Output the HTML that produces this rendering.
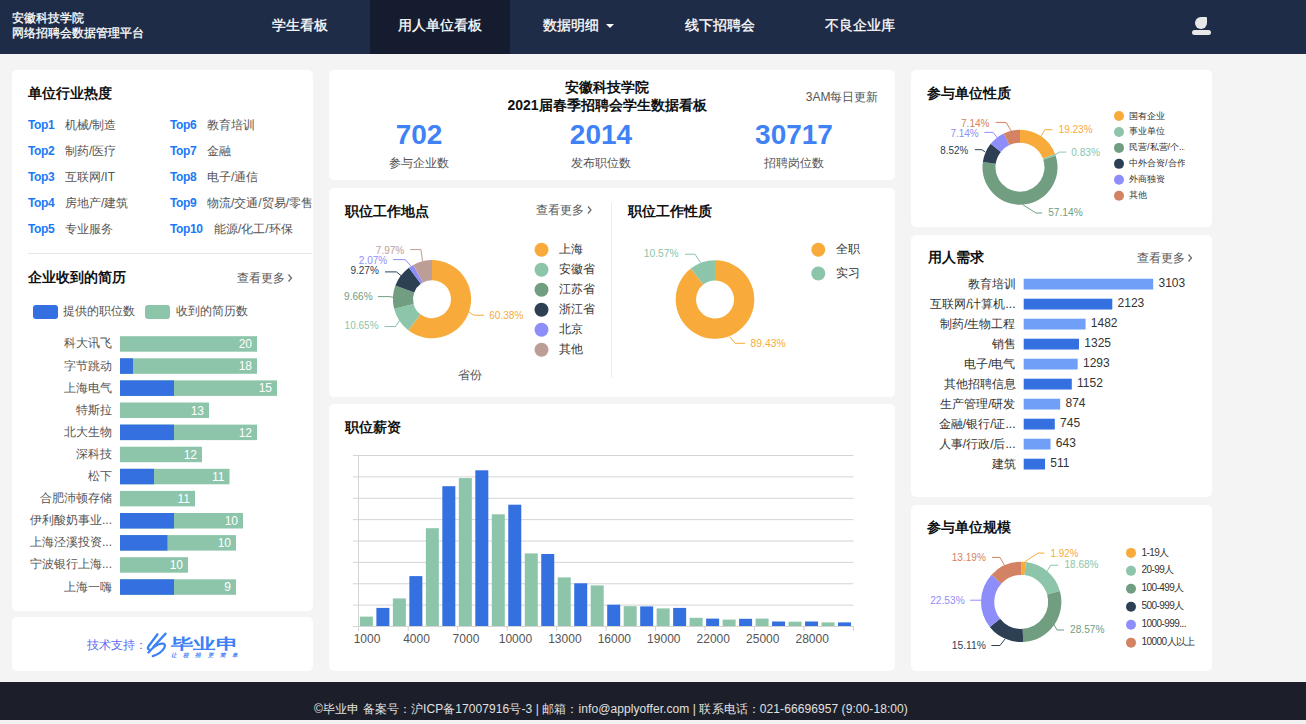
<!DOCTYPE html>
<html><head><meta charset="utf-8"><style>
*{margin:0;padding:0;box-sizing:border-box}
html,body{width:1306px;height:724px;overflow:hidden;background:#f1f1f1;font-family:"Liberation Sans",sans-serif}
.t{position:absolute;white-space:nowrap}
.p{position:absolute;background:#fff;border-radius:5px}
#hdr{position:absolute;left:0;top:0;width:1306px;height:54px;background:#1f2c47}
#act{position:absolute;left:370px;top:0;width:140px;height:54px;background:#151c2f}
#body{position:absolute;left:0;top:54px;width:1306px;height:628px;background:#f4f4f4}
#ftr{position:absolute;left:0;top:682px;width:1306px;height:38px;background:#1c1f29}
svg{position:absolute;left:0;top:0}
svg text{font-family:"Liberation Sans",sans-serif}
</style></head><body>
<div id="hdr"></div><div id="act"></div><div id="body"></div><div id="ftr"></div>
<div class="p" style="left:12px;top:70px;width:301px;height:541px"></div>
<div class="p" style="left:12px;top:617px;width:301px;height:54px"></div>
<div class="p" style="left:329px;top:70px;width:566px;height:110px"></div>
<div class="p" style="left:329px;top:188px;width:566px;height:209px"></div>
<div class="p" style="left:329px;top:404px;width:566px;height:267px"></div>
<div class="p" style="left:911px;top:70px;width:301px;height:157px"></div>
<div class="p" style="left:911px;top:235px;width:301px;height:262px"></div>
<div class="p" style="left:911px;top:505px;width:301px;height:166px"></div>
<div class="t" style="left:12px;top:9.5px;line-height:16px;font-size:12px;color:#fff;-webkit-text-stroke:0.3px #fff;">安徽科技学院</div>
<div class="t" style="left:12px;top:25.0px;line-height:16px;font-size:12px;color:#fff;-webkit-text-stroke:0.3px #fff;">网络招聘会数据管理平台</div>
<div class="t" style="left:0.0px;width:600px;text-align:center;top:14.5px;line-height:20px;font-size:14px;color:#fff;-webkit-text-stroke:0.3px #fff;">学生看板</div>
<div class="t" style="left:140.0px;width:600px;text-align:center;top:14.5px;line-height:20px;font-size:14px;color:#fff;-webkit-text-stroke:0.3px #fff;">用人单位看板</div>
<div class="t" style="left:271.0px;width:600px;text-align:center;top:14.5px;line-height:20px;font-size:14px;color:#fff;-webkit-text-stroke:0.3px #fff;">数据明细</div>
<div class="t" style="left:420.0px;width:600px;text-align:center;top:14.5px;line-height:20px;font-size:14px;color:#fff;-webkit-text-stroke:0.3px #fff;">线下招聘会</div>
<div class="t" style="left:560.0px;width:600px;text-align:center;top:14.5px;line-height:20px;font-size:14px;color:#fff;-webkit-text-stroke:0.3px #fff;">不良企业库</div>
<div style="position:absolute;left:1195px;top:17px;width:12px;height:12px;background:#e8e8e8;border-radius:6px 1px 6px 6px"></div>
<div style="position:absolute;left:1191.5px;top:29.5px;width:19px;height:5.5px;background:#e8e8e8;border-radius:3px"></div>
<div class="t" style="left:28px;top:82.5px;line-height:20px;font-size:14px;color:#111;font-weight:bold;">单位行业热度</div>
<div class="t" style="left:28px;top:114.5px;line-height:20px;font-size:12px;color:#1a7af5;font-weight:bold;letter-spacing:-0.4px;">Top1</div>
<div class="t" style="left:65px;top:114.5px;line-height:20px;font-size:12px;color:#555;">机械/制造</div>
<div class="t" style="left:170px;top:114.5px;line-height:20px;font-size:12px;color:#1a7af5;font-weight:bold;letter-spacing:-0.4px;">Top6</div>
<div class="t" style="left:207px;top:114.5px;line-height:20px;font-size:12px;color:#555;">教育培训</div>
<div class="t" style="left:28px;top:140.5px;line-height:20px;font-size:12px;color:#1a7af5;font-weight:bold;letter-spacing:-0.4px;">Top2</div>
<div class="t" style="left:65px;top:140.5px;line-height:20px;font-size:12px;color:#555;">制药/医疗</div>
<div class="t" style="left:170px;top:140.5px;line-height:20px;font-size:12px;color:#1a7af5;font-weight:bold;letter-spacing:-0.4px;">Top7</div>
<div class="t" style="left:207px;top:140.5px;line-height:20px;font-size:12px;color:#555;">金融</div>
<div class="t" style="left:28px;top:166.5px;line-height:20px;font-size:12px;color:#1a7af5;font-weight:bold;letter-spacing:-0.4px;">Top3</div>
<div class="t" style="left:65px;top:166.5px;line-height:20px;font-size:12px;color:#555;">互联网/IT</div>
<div class="t" style="left:170px;top:166.5px;line-height:20px;font-size:12px;color:#1a7af5;font-weight:bold;letter-spacing:-0.4px;">Top8</div>
<div class="t" style="left:207px;top:166.5px;line-height:20px;font-size:12px;color:#555;">电子/通信</div>
<div class="t" style="left:28px;top:192.5px;line-height:20px;font-size:12px;color:#1a7af5;font-weight:bold;letter-spacing:-0.4px;">Top4</div>
<div class="t" style="left:65px;top:192.5px;line-height:20px;font-size:12px;color:#555;">房地产/建筑</div>
<div class="t" style="left:170px;top:192.5px;line-height:20px;font-size:12px;color:#1a7af5;font-weight:bold;letter-spacing:-0.4px;">Top9</div>
<div class="t" style="left:207px;top:192.5px;line-height:20px;font-size:12px;color:#555;">物流/交通/贸易/零售</div>
<div class="t" style="left:28px;top:218.5px;line-height:20px;font-size:12px;color:#1a7af5;font-weight:bold;letter-spacing:-0.4px;">Top5</div>
<div class="t" style="left:65px;top:218.5px;line-height:20px;font-size:12px;color:#555;">专业服务</div>
<div class="t" style="left:170px;top:218.5px;line-height:20px;font-size:12px;color:#1a7af5;font-weight:bold;letter-spacing:-0.4px;">Top10</div>
<div class="t" style="left:214px;top:218.5px;line-height:20px;font-size:12px;color:#555;">能源/化工/环保</div>
<div class="t" style="left:28px;top:266.5px;line-height:20px;font-size:14px;color:#111;font-weight:bold;">企业收到的简历</div>
<div class="t" style="left:237px;top:267.5px;line-height:20px;font-size:12px;color:#555;">查看更多</div>
<div class="t" style="left:63px;top:301.0px;line-height:20px;font-size:12px;color:#555;">提供的职位数</div>
<div class="t" style="left:175.5px;top:301.0px;line-height:20px;font-size:12px;color:#555;">收到的简历数</div>
<div class="t" style="left:-488px;width:600px;text-align:right;top:333.45px;line-height:20px;font-size:12px;color:#555;">科大讯飞</div>
<div class="t" style="left:-488px;width:600px;text-align:right;top:355.55px;line-height:20px;font-size:12px;color:#555;">字节跳动</div>
<div class="t" style="left:-488px;width:600px;text-align:right;top:377.65px;line-height:20px;font-size:12px;color:#555;">上海电气</div>
<div class="t" style="left:-488px;width:600px;text-align:right;top:399.75px;line-height:20px;font-size:12px;color:#555;">特斯拉</div>
<div class="t" style="left:-488px;width:600px;text-align:right;top:421.85px;line-height:20px;font-size:12px;color:#555;">北大生物</div>
<div class="t" style="left:-488px;width:600px;text-align:right;top:443.95px;line-height:20px;font-size:12px;color:#555;">深科技</div>
<div class="t" style="left:-488px;width:600px;text-align:right;top:466.05px;line-height:20px;font-size:12px;color:#555;">松下</div>
<div class="t" style="left:-488px;width:600px;text-align:right;top:488.15px;line-height:20px;font-size:12px;color:#555;">合肥沛顿存储</div>
<div class="t" style="left:-488px;width:600px;text-align:right;top:510.25px;line-height:20px;font-size:12px;color:#555;">伊利酸奶事业...</div>
<div class="t" style="left:-488px;width:600px;text-align:right;top:532.35px;line-height:20px;font-size:12px;color:#555;">上海泾溪投资...</div>
<div class="t" style="left:-488px;width:600px;text-align:right;top:554.45px;line-height:20px;font-size:12px;color:#555;">宁波银行上海...</div>
<div class="t" style="left:-488px;width:600px;text-align:right;top:576.55px;line-height:20px;font-size:12px;color:#555;">上海一嗨</div>
<div class="t" style="left:87px;top:636.5px;line-height:16px;font-size:12px;color:#5b6cf2;">技术支持：</div>
<div class="t" style="left:307.0px;width:600px;text-align:center;top:76.5px;line-height:20px;font-size:14px;color:#111;font-weight:bold;">安徽科技学院</div>
<div class="t" style="left:307.0px;width:600px;text-align:center;top:94.5px;line-height:20px;font-size:14px;color:#111;font-weight:bold;">2021届春季招聘会学生数据看板</div>
<div class="t" style="left:278.5px;width:600px;text-align:right;top:87.0px;line-height:20px;font-size:12px;color:#555;">3AM每日更新</div>
<div class="t" style="left:119.0px;width:600px;text-align:center;top:118.5px;line-height:32px;font-size:28px;color:#3f82f5;font-weight:bold;">702</div>
<div class="t" style="left:119.0px;width:600px;text-align:center;top:153.0px;line-height:20px;font-size:12px;color:#555;">参与企业数</div>
<div class="t" style="left:301.0px;width:600px;text-align:center;top:118.5px;line-height:32px;font-size:28px;color:#3f82f5;font-weight:bold;">2014</div>
<div class="t" style="left:301.0px;width:600px;text-align:center;top:153.0px;line-height:20px;font-size:12px;color:#555;">发布职位数</div>
<div class="t" style="left:494.0px;width:600px;text-align:center;top:118.5px;line-height:32px;font-size:28px;color:#3f82f5;font-weight:bold;">30717</div>
<div class="t" style="left:494.0px;width:600px;text-align:center;top:153.0px;line-height:20px;font-size:12px;color:#555;">招聘岗位数</div>
<div class="t" style="left:345px;top:200.5px;line-height:20px;font-size:14px;color:#111;font-weight:bold;">职位工作地点</div>
<div class="t" style="left:536px;top:199.5px;line-height:20px;font-size:12px;color:#555;">查看更多</div>
<div class="t" style="left:559px;top:239.3px;line-height:20px;font-size:12px;color:#333;">上海</div>
<div class="t" style="left:559px;top:259.3px;line-height:20px;font-size:12px;color:#333;">安徽省</div>
<div class="t" style="left:559px;top:279.3px;line-height:20px;font-size:12px;color:#333;">江苏省</div>
<div class="t" style="left:559px;top:299.3px;line-height:20px;font-size:12px;color:#333;">浙江省</div>
<div class="t" style="left:559px;top:319.3px;line-height:20px;font-size:12px;color:#333;">北京</div>
<div class="t" style="left:559px;top:339.3px;line-height:20px;font-size:12px;color:#333;">其他</div>
<div class="t" style="left:170.0px;width:600px;text-align:center;top:364.5px;line-height:20px;font-size:12px;color:#555;">省份</div>
<div class="t" style="left:628px;top:200.5px;line-height:20px;font-size:14px;color:#111;font-weight:bold;">职位工作性质</div>
<div class="t" style="left:836px;top:239.3px;line-height:20px;font-size:12px;color:#333;">全职</div>
<div class="t" style="left:836px;top:263.0px;line-height:20px;font-size:12px;color:#333;">实习</div>
<div class="t" style="left:345px;top:416.5px;line-height:20px;font-size:14px;color:#111;font-weight:bold;">职位薪资</div>
<div class="t" style="left:927px;top:82.5px;line-height:20px;font-size:14px;color:#111;font-weight:bold;">参与单位性质</div>
<div class="t" style="left:1129px;top:108.5px;width:56px;overflow:hidden;white-space:nowrap;line-height:14px;font-size:9px;color:#333">国有企业</div>
<div class="t" style="left:1129px;top:124.44999999999999px;width:56px;overflow:hidden;white-space:nowrap;line-height:14px;font-size:9px;color:#333">事业单位</div>
<div class="t" style="left:1129px;top:140.4px;width:56px;overflow:hidden;white-space:nowrap;line-height:14px;font-size:9px;color:#333">民营/私营/个...</div>
<div class="t" style="left:1129px;top:156.35px;width:56px;overflow:hidden;white-space:nowrap;line-height:14px;font-size:9px;color:#333">中外合资/合作...</div>
<div class="t" style="left:1129px;top:172.3px;width:56px;overflow:hidden;white-space:nowrap;line-height:14px;font-size:9px;color:#333">外商独资</div>
<div class="t" style="left:1129px;top:188.25px;width:56px;overflow:hidden;white-space:nowrap;line-height:14px;font-size:9px;color:#333">其他</div>
<div class="t" style="left:927.8px;top:247.3px;line-height:20px;font-size:14px;color:#111;font-weight:bold;">用人需求</div>
<div class="t" style="left:1136.5px;top:247.5px;line-height:20px;font-size:12px;color:#555;">查看更多</div>
<div class="t" style="left:415.5px;width:600px;text-align:right;top:273.59999999999997px;line-height:20px;font-size:12px;color:#333;">教育培训</div>
<div class="t" style="left:415.5px;width:600px;text-align:right;top:293.59999999999997px;line-height:20px;font-size:12px;color:#333;">互联网/计算机...</div>
<div class="t" style="left:415.5px;width:600px;text-align:right;top:313.59999999999997px;line-height:20px;font-size:12px;color:#333;">制药/生物工程</div>
<div class="t" style="left:415.5px;width:600px;text-align:right;top:333.59999999999997px;line-height:20px;font-size:12px;color:#333;">销售</div>
<div class="t" style="left:415.5px;width:600px;text-align:right;top:353.59999999999997px;line-height:20px;font-size:12px;color:#333;">电子/电气</div>
<div class="t" style="left:415.5px;width:600px;text-align:right;top:373.59999999999997px;line-height:20px;font-size:12px;color:#333;">其他招聘信息</div>
<div class="t" style="left:415.5px;width:600px;text-align:right;top:393.59999999999997px;line-height:20px;font-size:12px;color:#333;">生产管理/研发</div>
<div class="t" style="left:415.5px;width:600px;text-align:right;top:413.59999999999997px;line-height:20px;font-size:12px;color:#333;">金融/银行/证...</div>
<div class="t" style="left:415.5px;width:600px;text-align:right;top:433.59999999999997px;line-height:20px;font-size:12px;color:#333;">人事/行政/后...</div>
<div class="t" style="left:415.5px;width:600px;text-align:right;top:453.59999999999997px;line-height:20px;font-size:12px;color:#333;">建筑</div>
<div class="t" style="left:927.3px;top:517.3px;line-height:20px;font-size:14px;color:#111;font-weight:bold;">参与单位规模</div>
<div class="t" style="left:1141.5px;top:545.5px;width:60px;overflow:hidden;white-space:nowrap;line-height:14px;font-size:10px;letter-spacing:-0.55px;color:#333">1-19人</div>
<div class="t" style="left:1141.5px;top:563.45px;width:60px;overflow:hidden;white-space:nowrap;line-height:14px;font-size:10px;letter-spacing:-0.55px;color:#333">20-99人</div>
<div class="t" style="left:1141.5px;top:581.4px;width:60px;overflow:hidden;white-space:nowrap;line-height:14px;font-size:10px;letter-spacing:-0.55px;color:#333">100-499人</div>
<div class="t" style="left:1141.5px;top:599.35px;width:60px;overflow:hidden;white-space:nowrap;line-height:14px;font-size:10px;letter-spacing:-0.55px;color:#333">500-999人</div>
<div class="t" style="left:1141.5px;top:617.3px;width:60px;overflow:hidden;white-space:nowrap;line-height:14px;font-size:10px;letter-spacing:-0.55px;color:#333">1000-999...</div>
<div class="t" style="left:1141.5px;top:635.25px;width:60px;overflow:hidden;white-space:nowrap;line-height:14px;font-size:10px;letter-spacing:-0.55px;color:#333">10000人以上</div>
<div class="t" style="left:311.0px;width:600px;text-align:center;top:701.3px;line-height:16px;font-size:12px;color:#e0e0e0;letter-spacing:0.08px;">©毕业申 备案号：沪ICP备17007916号-3 | 邮箱：info@applyoffer.com | 联系电话：021-66696957 (9:00-18:00)</div>
<svg width="1306" height="724" viewBox="0 0 1306 724">
<path d="M606,24 L614,24 L610,28 Z" fill="#fff"/>
<line x1="28" y1="253.5" x2="312" y2="253.5" stroke="#e6e6e6" stroke-width="1"/>
<polyline points="288.5,274.5 291.5,278 288.5,281.5" fill="none" stroke="#666" stroke-width="1.2"/>
<rect x="33.00" y="305.00" width="25.00" height="14.00" fill="#3470df" rx="3"/>
<rect x="145.00" y="305.00" width="25.00" height="14.00" fill="#8cc5aa" rx="3"/>
<rect x="120.00" y="336.20" width="137.00" height="15.50" fill="#8cc5aa" rx="0"/>
<text x="252" y="348.25" font-size="12" fill="#fff" text-anchor="end">20</text>
<rect x="120.00" y="358.30" width="137.00" height="15.50" fill="#8cc5aa" rx="0"/>
<rect x="120.00" y="358.30" width="13.00" height="15.50" fill="#3470df" rx="0"/>
<text x="252" y="370.35" font-size="12" fill="#fff" text-anchor="end">18</text>
<rect x="120.00" y="380.40" width="157.00" height="15.50" fill="#8cc5aa" rx="0"/>
<rect x="120.00" y="380.40" width="54.00" height="15.50" fill="#3470df" rx="0"/>
<text x="272" y="392.45" font-size="12" fill="#fff" text-anchor="end">15</text>
<rect x="120.00" y="402.50" width="89.00" height="15.50" fill="#8cc5aa" rx="0"/>
<text x="204" y="414.55" font-size="12" fill="#fff" text-anchor="end">13</text>
<rect x="120.00" y="424.60" width="137.00" height="15.50" fill="#8cc5aa" rx="0"/>
<rect x="120.00" y="424.60" width="54.00" height="15.50" fill="#3470df" rx="0"/>
<text x="252" y="436.65" font-size="12" fill="#fff" text-anchor="end">12</text>
<rect x="120.00" y="446.70" width="82.00" height="15.50" fill="#8cc5aa" rx="0"/>
<text x="197" y="458.75" font-size="12" fill="#fff" text-anchor="end">12</text>
<rect x="120.00" y="468.80" width="109.50" height="15.50" fill="#8cc5aa" rx="0"/>
<rect x="120.00" y="468.80" width="34.00" height="15.50" fill="#3470df" rx="0"/>
<text x="224.5" y="480.85" font-size="12" fill="#fff" text-anchor="end">11</text>
<rect x="120.00" y="490.90" width="75.00" height="15.50" fill="#8cc5aa" rx="0"/>
<text x="190" y="502.95" font-size="12" fill="#fff" text-anchor="end">11</text>
<rect x="120.00" y="513.00" width="123.00" height="15.50" fill="#8cc5aa" rx="0"/>
<rect x="120.00" y="513.00" width="54.00" height="15.50" fill="#3470df" rx="0"/>
<text x="238" y="525.05" font-size="12" fill="#fff" text-anchor="end">10</text>
<rect x="120.00" y="535.10" width="116.00" height="15.50" fill="#8cc5aa" rx="0"/>
<rect x="120.00" y="535.10" width="47.40" height="15.50" fill="#3470df" rx="0"/>
<text x="231" y="547.15" font-size="12" fill="#fff" text-anchor="end">10</text>
<rect x="120.00" y="557.20" width="68.00" height="15.50" fill="#8cc5aa" rx="0"/>
<text x="183" y="569.25" font-size="12" fill="#fff" text-anchor="end">10</text>
<rect x="120.00" y="579.30" width="116.00" height="15.50" fill="#8cc5aa" rx="0"/>
<rect x="120.00" y="579.30" width="54.00" height="15.50" fill="#3470df" rx="0"/>
<text x="231" y="591.35" font-size="12" fill="#fff" text-anchor="end">9</text>
<polyline points="588,206.5 591,210 588,213.5" fill="none" stroke="#666" stroke-width="1.2"/>
<line x1="611.5" y1="203" x2="611.5" y2="378" stroke="#ececec" stroke-width="1"/>
<path d="M432.00,260.10 A39.1,39.1 0 1 1 408.27,330.27 L420.47,314.30 A19,19 0 1 0 432.00,280.20 Z" fill="#f8ab3b" />
<path d="M408.27,330.27 A39.1,39.1 0 0 1 394.11,308.85 L413.59,303.89 A19,19 0 0 0 420.47,314.30 Z" fill="#8cc5aa" />
<path d="M394.11,308.85 A39.1,39.1 0 0 1 395.37,285.52 L414.20,292.55 A19,19 0 0 0 413.59,303.89 Z" fill="#719d80" />
<path d="M395.37,285.52 A39.1,39.1 0 0 1 408.94,267.63 L420.79,283.86 A19,19 0 0 0 414.20,292.55 Z" fill="#2d4053" />
<path d="M408.94,267.63 A39.1,39.1 0 0 1 413.23,264.90 L422.88,282.53 A19,19 0 0 0 420.79,283.86 Z" fill="#8e8efa" />
<path d="M413.23,264.90 A39.1,39.1 0 0 1 432.00,260.10 L432.00,280.20 A19,19 0 0 0 422.88,282.53 Z" fill="#bd9e96" />
<polyline points="469.0,312.0 473.5,315.2 484.0,315.2" fill="none" stroke="#f8ab3b" stroke-width="1"/>
<text x="489.3" y="318.52" font-size="11.5" fill="#f8ab3b" text-anchor="start" textLength="34" lengthAdjust="spacingAndGlyphs">60.38%</text>
<polyline points="399.4,320.7 395.6,326.5 384.5,326.5" fill="none" stroke="#8cc5aa" stroke-width="1"/>
<text x="378.6" y="329.32" font-size="11.5" fill="#8cc5aa" text-anchor="end" textLength="34" lengthAdjust="spacingAndGlyphs">10.65%</text>
<polyline points="393.0,297.2 389.0,296.6 378.0,296.6" fill="none" stroke="#719d80" stroke-width="1"/>
<text x="372.6" y="299.52" font-size="11.5" fill="#719d80" text-anchor="end" textLength="28.5" lengthAdjust="spacingAndGlyphs">9.66%</text>
<polyline points="401.0,275.6 396.4,271.9 385.0,271.9" fill="none" stroke="#2d4053" stroke-width="1"/>
<text x="378.9" y="274.42" font-size="11.5" fill="#2d4053" text-anchor="end" textLength="28.5" lengthAdjust="spacingAndGlyphs">9.27%</text>
<polyline points="411.0,266.3 405.4,259.6 393.2,259.6" fill="none" stroke="#8e8efa" stroke-width="1"/>
<text x="387.3" y="263.72" font-size="11.5" fill="#8e8efa" text-anchor="end" textLength="28.5" lengthAdjust="spacingAndGlyphs">2.07%</text>
<polyline points="422.5,261.3 421.0,249.6 410.0,249.6" fill="none" stroke="#bd9e96" stroke-width="1"/>
<text x="404.3" y="253.72" font-size="11.5" fill="#bd9e96" text-anchor="end" textLength="28.5" lengthAdjust="spacingAndGlyphs">7.97%</text>
<circle cx="541.5" cy="249.8" r="7" fill="#f8ab3b"/>
<circle cx="541.5" cy="269.8" r="7" fill="#8cc5aa"/>
<circle cx="541.5" cy="289.8" r="7" fill="#719d80"/>
<circle cx="541.5" cy="309.8" r="7" fill="#2d4053"/>
<circle cx="541.5" cy="329.8" r="7" fill="#8e8efa"/>
<circle cx="541.5" cy="349.8" r="7" fill="#bd9e96"/>
<path d="M715.00,260.20 A39.3,39.3 0 1 1 690.78,268.55 L703.29,284.54 A19,19 0 1 0 715.00,280.50 Z" fill="#f8ab3b" />
<path d="M690.78,268.55 A39.3,39.3 0 0 1 715.00,260.20 L715.00,280.50 A19,19 0 0 0 703.29,284.54 Z" fill="#8cc5aa" />
<polyline points="729.5,336.5 735.0,343.3 745.0,343.3" fill="none" stroke="#f8ab3b" stroke-width="1"/>
<text x="750.6" y="347.42" font-size="11.5" fill="#f8ab3b" text-anchor="start" textLength="35" lengthAdjust="spacingAndGlyphs">89.43%</text>
<polyline points="700.5,262.7 695.0,254.2 685.0,254.2" fill="none" stroke="#8cc5aa" stroke-width="1"/>
<text x="678.7" y="257.42" font-size="11.5" fill="#8cc5aa" text-anchor="end" textLength="35" lengthAdjust="spacingAndGlyphs">10.57%</text>
<circle cx="818.3" cy="249.8" r="7" fill="#f8ab3b"/>
<circle cx="818.3" cy="273.5" r="7" fill="#8cc5aa"/>
<line x1="353" y1="455.5" x2="853.4" y2="455.5" stroke="#d4d4d4" stroke-width="1"/>
<line x1="353" y1="476.875" x2="853.4" y2="476.875" stroke="#d4d4d4" stroke-width="1"/>
<line x1="353" y1="498.25" x2="853.4" y2="498.25" stroke="#d4d4d4" stroke-width="1"/>
<line x1="353" y1="519.625" x2="853.4" y2="519.625" stroke="#d4d4d4" stroke-width="1"/>
<line x1="353" y1="541.0" x2="853.4" y2="541.0" stroke="#d4d4d4" stroke-width="1"/>
<line x1="353" y1="562.375" x2="853.4" y2="562.375" stroke="#d4d4d4" stroke-width="1"/>
<line x1="353" y1="583.75" x2="853.4" y2="583.75" stroke="#d4d4d4" stroke-width="1"/>
<line x1="353" y1="605.125" x2="853.4" y2="605.125" stroke="#d4d4d4" stroke-width="1"/>
<line x1="353" y1="626.5" x2="853.4" y2="626.5" stroke="#d4d4d4" stroke-width="1"/>
<line x1="358.5" y1="455" x2="358.5" y2="631" stroke="#d4d4d4" stroke-width="1"/>
<rect x="359.90" y="616.60" width="13.00" height="9.40" fill="#8cc5aa" rx="0"/>
<rect x="376.39" y="607.90" width="13.00" height="18.10" fill="#3470df" rx="0"/>
<rect x="392.87" y="598.40" width="13.00" height="27.60" fill="#8cc5aa" rx="0"/>
<rect x="409.36" y="576.10" width="13.00" height="49.90" fill="#3470df" rx="0"/>
<rect x="425.85" y="528.20" width="13.00" height="97.80" fill="#8cc5aa" rx="0"/>
<rect x="442.33" y="486.20" width="13.00" height="139.80" fill="#3470df" rx="0"/>
<rect x="458.82" y="478.10" width="13.00" height="147.90" fill="#8cc5aa" rx="0"/>
<rect x="475.31" y="470.30" width="13.00" height="155.70" fill="#3470df" rx="0"/>
<rect x="491.79" y="514.30" width="13.00" height="111.70" fill="#8cc5aa" rx="0"/>
<rect x="508.28" y="504.70" width="13.00" height="121.30" fill="#3470df" rx="0"/>
<rect x="524.77" y="553.40" width="13.00" height="72.60" fill="#8cc5aa" rx="0"/>
<rect x="541.25" y="554.00" width="13.00" height="72.00" fill="#3470df" rx="0"/>
<rect x="557.74" y="577.40" width="13.00" height="48.60" fill="#8cc5aa" rx="0"/>
<rect x="574.23" y="583.30" width="13.00" height="42.70" fill="#3470df" rx="0"/>
<rect x="590.71" y="585.40" width="13.00" height="40.60" fill="#8cc5aa" rx="0"/>
<rect x="607.20" y="604.70" width="13.00" height="21.30" fill="#3470df" rx="0"/>
<rect x="623.69" y="606.20" width="13.00" height="19.80" fill="#8cc5aa" rx="0"/>
<rect x="640.17" y="606.40" width="13.00" height="19.60" fill="#3470df" rx="0"/>
<rect x="656.66" y="608.40" width="13.00" height="17.60" fill="#8cc5aa" rx="0"/>
<rect x="673.15" y="607.90" width="13.00" height="18.10" fill="#3470df" rx="0"/>
<rect x="689.63" y="617.80" width="13.00" height="8.20" fill="#8cc5aa" rx="0"/>
<rect x="706.12" y="618.60" width="13.00" height="7.40" fill="#3470df" rx="0"/>
<rect x="722.61" y="619.60" width="13.00" height="6.40" fill="#8cc5aa" rx="0"/>
<rect x="739.09" y="618.80" width="13.00" height="7.20" fill="#3470df" rx="0"/>
<rect x="755.58" y="618.60" width="13.00" height="7.40" fill="#8cc5aa" rx="0"/>
<rect x="772.07" y="621.50" width="13.00" height="4.50" fill="#3470df" rx="0"/>
<rect x="788.55" y="621.70" width="13.00" height="4.30" fill="#8cc5aa" rx="0"/>
<rect x="805.04" y="621.50" width="13.00" height="4.50" fill="#3470df" rx="0"/>
<rect x="821.53" y="622.40" width="13.00" height="3.60" fill="#8cc5aa" rx="0"/>
<rect x="838.01" y="622.40" width="13.00" height="3.60" fill="#3470df" rx="0"/>
<text x="367.04333333333335" y="643.10" font-size="12" fill="#555" text-anchor="middle">1000</text>
<line x1="408.26" y1="626" x2="408.26" y2="631" stroke="#d4d4d4" stroke-width="1"/>
<text x="416.50333333333333" y="643.10" font-size="12" fill="#555" text-anchor="middle">4000</text>
<line x1="457.72" y1="626" x2="457.72" y2="631" stroke="#d4d4d4" stroke-width="1"/>
<text x="465.96333333333337" y="643.10" font-size="12" fill="#555" text-anchor="middle">7000</text>
<line x1="507.18" y1="626" x2="507.18" y2="631" stroke="#d4d4d4" stroke-width="1"/>
<text x="515.4233333333333" y="643.10" font-size="12" fill="#555" text-anchor="middle">10000</text>
<line x1="556.64" y1="626" x2="556.64" y2="631" stroke="#d4d4d4" stroke-width="1"/>
<text x="564.8833333333333" y="643.10" font-size="12" fill="#555" text-anchor="middle">13000</text>
<line x1="606.0999999999999" y1="626" x2="606.0999999999999" y2="631" stroke="#d4d4d4" stroke-width="1"/>
<text x="614.3433333333332" y="643.10" font-size="12" fill="#555" text-anchor="middle">16000</text>
<line x1="655.56" y1="626" x2="655.56" y2="631" stroke="#d4d4d4" stroke-width="1"/>
<text x="663.8033333333333" y="643.10" font-size="12" fill="#555" text-anchor="middle">19000</text>
<line x1="705.02" y1="626" x2="705.02" y2="631" stroke="#d4d4d4" stroke-width="1"/>
<text x="713.2633333333333" y="643.10" font-size="12" fill="#555" text-anchor="middle">22000</text>
<line x1="754.48" y1="626" x2="754.48" y2="631" stroke="#d4d4d4" stroke-width="1"/>
<text x="762.7233333333334" y="643.10" font-size="12" fill="#555" text-anchor="middle">25000</text>
<line x1="803.9399999999999" y1="626" x2="803.9399999999999" y2="631" stroke="#d4d4d4" stroke-width="1"/>
<text x="812.1833333333333" y="643.10" font-size="12" fill="#555" text-anchor="middle">28000</text>
<line x1="853.5" y1="626" x2="853.5" y2="631" stroke="#d4d4d4" stroke-width="1"/>
<path d="M1020.00,129.70 A37.5,37.5 0 0 1 1055.06,153.90 L1042.91,158.51 A24.5,24.5 0 0 0 1020.00,142.70 Z" fill="#f8ab3b" />
<path d="M1055.06,153.90 A37.5,37.5 0 0 1 1055.71,155.75 L1043.33,159.72 A24.5,24.5 0 0 0 1042.91,158.51 Z" fill="#8cc5aa" />
<path d="M1055.71,155.75 A37.5,37.5 0 1 1 982.86,162.03 L995.73,163.82 A24.5,24.5 0 1 0 1043.33,159.72 Z" fill="#719d80" />
<path d="M982.86,162.03 A37.5,37.5 0 0 1 990.69,143.81 L1000.85,151.92 A24.5,24.5 0 0 0 995.73,163.82 Z" fill="#2d4053" />
<path d="M990.69,143.81 A37.5,37.5 0 0 1 1003.74,133.41 L1009.37,145.12 A24.5,24.5 0 0 0 1000.85,151.92 Z" fill="#8e8efa" />
<path d="M1003.74,133.41 A37.5,37.5 0 0 1 1020.00,129.70 L1020.00,142.70 A24.5,24.5 0 0 0 1009.37,145.12 Z" fill="#d38263" />
<polyline points="1041.3,135.9 1044.8,129.7 1052.5,129.7" fill="none" stroke="#f8ab3b" stroke-width="1"/>
<text x="1058.6" y="133.42" font-size="11.5" fill="#f8ab3b" text-anchor="start" textLength="34" lengthAdjust="spacingAndGlyphs">19.23%</text>
<polyline points="1055.0,154.9 1059.4,152.1 1066.3,152.1" fill="none" stroke="#8cc5aa" stroke-width="1"/>
<text x="1071.2" y="155.92" font-size="11.5" fill="#8cc5aa" text-anchor="start" textLength="28.8" lengthAdjust="spacingAndGlyphs">0.83%</text>
<polyline points="1022.3,204.4 1036.0,213.0 1042.2,213.0" fill="none" stroke="#719d80" stroke-width="1"/>
<text x="1048.2" y="216.32" font-size="11.5" fill="#719d80" text-anchor="start" textLength="34.5" lengthAdjust="spacingAndGlyphs">57.14%</text>
<polyline points="984.9,151.8 981.8,149.7 974.9,149.7" fill="none" stroke="#2d4053" stroke-width="1"/>
<text x="968.3" y="153.82" font-size="11.5" fill="#2d4053" text-anchor="end" textLength="28" lengthAdjust="spacingAndGlyphs">8.52%</text>
<polyline points="997.3,137.6 993.0,132.4 984.4,132.4" fill="none" stroke="#8e8efa" stroke-width="1"/>
<text x="978.7" y="136.52" font-size="11.5" fill="#8e8efa" text-anchor="end" textLength="28.3" lengthAdjust="spacingAndGlyphs">7.14%</text>
<polyline points="1011.1,130.7 1006.0,122.4 995.6,122.4" fill="none" stroke="#d38263" stroke-width="1"/>
<text x="989.5" y="126.52" font-size="11.5" fill="#d38263" text-anchor="end" textLength="28.5" lengthAdjust="spacingAndGlyphs">7.14%</text>
<circle cx="1119" cy="116.0" r="5" fill="#f8ab3b"/>
<circle cx="1119" cy="131.95" r="5" fill="#8cc5aa"/>
<circle cx="1119" cy="147.9" r="5" fill="#719d80"/>
<circle cx="1119" cy="163.85" r="5" fill="#2d4053"/>
<circle cx="1119" cy="179.8" r="5" fill="#8e8efa"/>
<circle cx="1119" cy="195.75" r="5" fill="#d38263"/>
<polyline points="1188.5,254.5 1191.5,258 1188.5,261.5" fill="none" stroke="#666" stroke-width="1.2"/>
<rect x="1023.70" y="278.70" width="129.50" height="10.80" fill="#6f9ff6" rx="0"/>
<text x="1158.5" y="286.90" font-size="12" fill="#333" text-anchor="start">3103</text>
<rect x="1023.70" y="298.70" width="88.60" height="10.80" fill="#3470df" rx="0"/>
<text x="1117.6008701256849" y="306.90" font-size="12" fill="#333" text-anchor="start">2123</text>
<rect x="1023.70" y="318.70" width="61.85" height="10.80" fill="#6f9ff6" rx="0"/>
<text x="1090.849500483403" y="326.90" font-size="12" fill="#333" text-anchor="start">1482</text>
<rect x="1023.70" y="338.70" width="55.30" height="10.80" fill="#3470df" rx="0"/>
<text x="1084.2972929423138" y="346.90" font-size="12" fill="#333" text-anchor="start">1325</text>
<rect x="1023.70" y="358.70" width="53.96" height="10.80" fill="#6f9ff6" rx="0"/>
<text x="1082.9618111504994" y="366.90" font-size="12" fill="#333" text-anchor="start">1293</text>
<rect x="1023.70" y="378.70" width="48.08" height="10.80" fill="#3470df" rx="0"/>
<text x="1077.0773445053173" y="386.90" font-size="12" fill="#333" text-anchor="start">1152</text>
<rect x="1023.70" y="398.70" width="36.48" height="10.80" fill="#6f9ff6" rx="0"/>
<text x="1065.47534643893" y="406.90" font-size="12" fill="#333" text-anchor="start">874</text>
<rect x="1023.70" y="418.70" width="31.09" height="10.80" fill="#3470df" rx="0"/>
<text x="1060.0916854656784" y="426.90" font-size="12" fill="#333" text-anchor="start">745</text>
<rect x="1023.70" y="438.70" width="26.83" height="10.80" fill="#6f9ff6" rx="0"/>
<text x="1055.83483725427" y="446.90" font-size="12" fill="#333" text-anchor="start">643</text>
<rect x="1023.70" y="458.70" width="21.33" height="10.80" fill="#3470df" rx="0"/>
<text x="1050.3259748630358" y="466.90" font-size="12" fill="#333" text-anchor="start">511</text>
<path d="M1021.20,561.70 A40.2,40.2 0 0 1 1026.04,561.99 L1024.45,575.10 A27,27 0 0 0 1021.20,574.90 Z" fill="#f8ab3b" />
<path d="M1026.04,561.99 A40.2,40.2 0 0 1 1059.87,590.93 L1047.17,594.53 A27,27 0 0 0 1024.45,575.10 Z" fill="#8cc5aa" />
<path d="M1059.87,590.93 A40.2,40.2 0 0 1 1023.30,642.05 L1022.61,628.86 A27,27 0 0 0 1047.17,594.53 Z" fill="#719d80" />
<path d="M1023.30,642.05 A40.2,40.2 0 0 1 989.78,626.98 L1000.10,618.74 A27,27 0 0 0 1022.61,628.86 Z" fill="#2d4053" />
<path d="M989.78,626.98 A40.2,40.2 0 0 1 991.57,574.73 L1001.30,583.65 A27,27 0 0 0 1000.10,618.74 Z" fill="#8e8efa" />
<path d="M991.57,574.73 A40.2,40.2 0 0 1 1021.20,561.70 L1021.20,574.90 A27,27 0 0 0 1001.30,583.65 Z" fill="#d38263" />
<polyline points="1024.6,561.8 1038.0,553.1 1044.4,553.1" fill="none" stroke="#f8ab3b" stroke-width="1"/>
<text x="1050.6" y="557.22" font-size="11.5" fill="#f8ab3b" text-anchor="start" textLength="28" lengthAdjust="spacingAndGlyphs">1.92%</text>
<polyline points="1047.2,571.2 1050.6,565.2 1058.2,565.2" fill="none" stroke="#8cc5aa" stroke-width="1"/>
<text x="1064.5" y="568.42" font-size="11.5" fill="#8cc5aa" text-anchor="start" textLength="34" lengthAdjust="spacingAndGlyphs">18.68%</text>
<polyline points="1053.6,623.9 1057.0,630.0 1064.0,630.0" fill="none" stroke="#719d80" stroke-width="1"/>
<text x="1070" y="633.12" font-size="11.5" fill="#719d80" text-anchor="start" textLength="34.5" lengthAdjust="spacingAndGlyphs">28.57%</text>
<polyline points="1005.0,639.0 1000.0,645.5 991.4,645.5" fill="none" stroke="#2d4053" stroke-width="1"/>
<text x="985.8" y="648.72" font-size="11.5" fill="#2d4053" text-anchor="end" textLength="34" lengthAdjust="spacingAndGlyphs">15.11%</text>
<polyline points="981.0,600.2 970.2,600.2" fill="none" stroke="#8e8efa" stroke-width="1"/>
<text x="964.7" y="603.82" font-size="11.5" fill="#8e8efa" text-anchor="end" textLength="34.5" lengthAdjust="spacingAndGlyphs">22.53%</text>
<polyline points="1004.7,565.7 1000.0,557.4 992.0,557.4" fill="none" stroke="#d38263" stroke-width="1"/>
<text x="985.8" y="561.22" font-size="11.5" fill="#d38263" text-anchor="end" textLength="34" lengthAdjust="spacingAndGlyphs">13.19%</text>
<circle cx="1131" cy="552.9" r="5" fill="#f8ab3b"/>
<circle cx="1131" cy="570.85" r="5" fill="#8cc5aa"/>
<circle cx="1131" cy="588.8" r="5" fill="#719d80"/>
<circle cx="1131" cy="606.75" r="5" fill="#2d4053"/>
<circle cx="1131" cy="624.6999999999999" r="5" fill="#8e8efa"/>
<circle cx="1131" cy="642.65" r="5" fill="#d38263"/>

<g fill="none" stroke="#3b82f6" stroke-linecap="round" stroke-width="2.3">
  <path d="M157.5,634.3 L148.6,646.2 Q146.8,649.3 149.3,649.6"/>
  <path d="M165.6,633.6 L153.5,646.8"/>
  <path d="M148.5,652.5 Q155,644.5 161.5,643.6 Q166.5,643.2 164.2,648 Q161,653.5 152.8,656.2"/>
</g>
<text x="170.5" y="648.6" font-size="15" font-weight="900" fill="#3b82f6" textLength="67.5" lengthAdjust="spacingAndGlyphs">毕业申</text>
<text x="171" y="656.8" font-size="5.5" font-weight="bold" font-style="italic" fill="#3b82f6" textLength="67" lengthAdjust="spacing">让校招更简单</text>

</svg>
</body></html>
